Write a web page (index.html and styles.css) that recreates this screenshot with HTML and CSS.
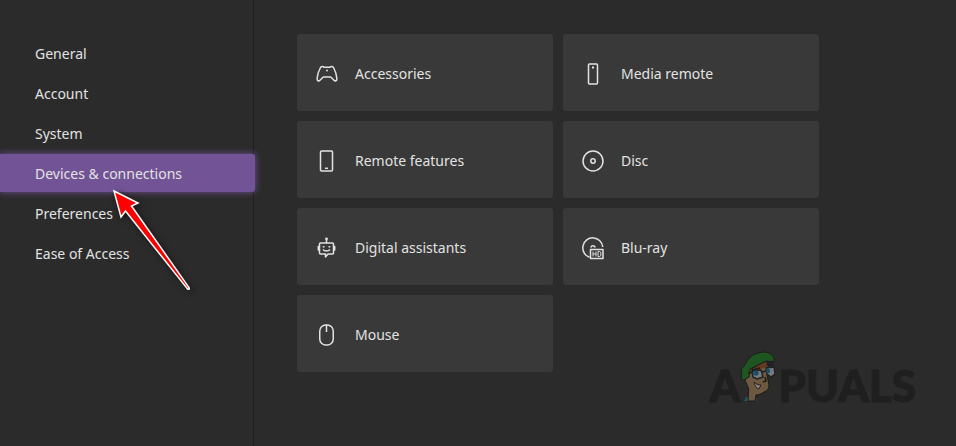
FILE: index.html
```html
<!DOCTYPE html>
<html lang="en">
<head>
<meta charset="utf-8">
<meta name="viewport" content="width=device-width, initial-scale=1">
<title>Settings</title>
<link rel="stylesheet" href="styles.css">
</head>
<body>
<div class="settings">
  <nav class="sidebar">
    <a class="nav-item" href="#general">General</a>
    <a class="nav-item" href="#account">Account</a>
    <a class="nav-item" href="#system">System</a>
    <a class="nav-item selected" href="#devices" aria-current="page">Devices &amp; connections</a>
    <a class="nav-item" href="#preferences">Preferences</a>
    <a class="nav-item" href="#ease">Ease of Access</a>
  </nav>
  <main class="tiles">
    <button class="tile" type="button">
      <svg class="icon" viewBox="0 0 24 24"><path d="M5.500 5.500C6.200 4.400 8.200 4.200 9 5.200h6c.8-1 2.800-.8 3.500.3 1.500 2.600 3 7.600 3.400 11.200.2 2.300-1.700 2.700-2.900 1.500L15.700 15H8.300L5 18.200c-1.200 1.200-3.100.8-2.900-1.500.4-3.600 1.900-8.600 3.400-11.200z"/><circle class="solid" cx="12" cy="8.500" r="1"/></svg>
      <span>Accessories</span>
    </button>
    <button class="tile" type="button">
      <svg class="icon" viewBox="0 0 24 24"><rect x="7.500" y="2" width="9" height="20" rx="1"/><path class="solid" d="M11 4.500h2v2h-2z"/></svg>
      <span>Media remote</span>
    </button>
    <button class="tile" type="button">
      <svg class="icon" viewBox="0 0 24 24"><rect x="5.500" y="2" width="12" height="20" rx="1"/><path d="M10 19.300h3"/></svg>
      <span>Remote features</span>
    </button>
    <button class="tile" type="button">
      <svg class="icon" viewBox="0 0 24 24"><circle cx="12" cy="12" r="10"/><circle cx="12" cy="12" r="2.200"/></svg>
      <span>Disc</span>
    </button>
    <button class="tile" type="button">
      <svg class="icon" viewBox="0 0 24 24"><path d="M5.500 7h12a1 1 0 0 1 1 1v9a1 1 0 0 1-1 1H13l-2.500 3v-3h-5a1 1 0 0 1-1-1V8a1 1 0 0 1 1-1zM11.500 7V3M4.500 10.500H3.300v3.500h1.200M18.500 10.500h1.200v3.500h-1.200M8 13.500c1.500 2 5.500 2 7 0"/><circle class="solid" cx="11.500" cy="2.800" r="1.400"/><path class="solid" d="M7.700 10h1.800v1.500H7.700zM13.500 10h1.800v1.500h-1.800z"/></svg>
      <span>Digital assistants</span>
    </button>
    <button class="tile" type="button">
      <svg class="icon" viewBox="0 0 24 24"><path d="M8.500 21.300A10 10 0 1 1 21.800 11M9.800 11.500a2.300 2.300 0 0 1 4.400 0"/><path d="M9.500 13.500h12.500v9H9.500z"/><path class="fine" d="M12 15.500v5M15 15.500v5M12 18h3M17 15.500h1.500q1.500 0 1.500 2.500t-1.500 2.500H17z"/></svg>
      <span>Blu-ray</span>
    </button>
    <button class="tile" type="button">
      <svg class="icon" viewBox="0 0 24 24"><rect x="4.750" y="2" width="13.500" height="20" rx="6"/><path d="M11.500 2v7"/></svg>
      <span>Mouse</span>
    </button>
  </main>
</div>
<svg class="pointer" viewBox="0 0 86 110" aria-hidden="true"><path d="M5 6L29 18 22.500 21 80 102.500Q81 105 78.500 104L16.500 26 12 32z"/></svg>
<div class="watermark">
  <span>A</span>
  <svg class="mascot" viewBox="0 0 38 52" aria-hidden="true">
    <path fill="#1d5965" d="M4 50l2-4 10 1 1 3z"/>
    <path fill="#6d5940" stroke="#1c1a18" d="M7 20L26 11l2 4-1 9 2 10c0 4-2 6-5 7-3 2-5 3-8 3l-1 6H8l.7-12L5 29z"/>
    <path fill="#653820" d="M17 15l9-5 1 6-5 1-4 3-8 3z"/>
    <path fill="#222226" d="M27 10h7v6l-6-1z"/>
    <path fill="#1f5521" stroke="#191d19" d="M1.300 28V18L5 14c2-5 5-8 8-10 4-2 9-3 13-3 4 1 7 3 8 6v4l-8-1-8 4-8 4-1 8-5 3z"/>
    <path fill="#777c82" stroke="#202226" stroke-width="1.500" d="M12 20l9-1 2 7-6 2-4-2zM26 17l8-1 1 7-4 3-4-3z"/>
    <circle fill="#194f69" cx="16" cy="22" r="2.700"/><circle fill="#194f69" cx="28" cy="20" r="2.200"/>
    <path fill="none" stroke="#201b17" stroke-width="1.500" d="M8 22l5-1M22 21l4-1M12 19l8-2M25 26l1 4-3 1"/>
    <path fill="#858585" stroke="#302019" d="M14 31c2 2 4 3 7 3l-2 4c-3-1-4-3-5-7z"/>
  </svg>
  <span>PUALS</span>
</div>
</body>
</html>
```

FILE: styles.css
```css
* {
  box-sizing: border-box;
}

body {
  margin: 0;
  background: #2b2b2b;
  color: #e2e2e2;
  font: 14px/20px "Noto Sans", "Open Sans", sans-serif;
}

.settings {
  display: flex;
  min-height: 100vh;
}

.sidebar {
  display: flex;
  flex: 0 0 255px;
  flex-direction: column;
  gap: 2px;
  padding-top: 34px;
  background: linear-gradient(#202020, #202020) right 1px top 0 / 1px 100% no-repeat;
}

.nav-item {
  padding: 10px 35px 8px;
  border-radius: 0 3px 3px 0;
  color: inherit;
  text-decoration: none;
}

.selected {
  background: #725496;
  box-shadow: 0 0 7px #725496;
}

.tiles {
  display: grid;
  flex: 1;
  grid-template-columns: repeat(2, minmax(0, 256px));
  grid-auto-rows: 77px;
  align-content: start;
  gap: 10px;
  padding: 34px 40px 34px 42px;
}

.tile {
  display: flex;
  align-items: center;
  gap: 16px;
  padding: 2px 18px 0;
  border: 0;
  border-radius: 3px;
  background: #393939;
  color: inherit;
  font: inherit;
}

.icon {
  width: 24px;
  height: 24px;
  fill: none;
  stroke: #e2e2e2;
  stroke-width: 1.5;
  stroke-linejoin: round;
}

.icon .solid {
  fill: #e2e2e2;
  stroke: none;
}

.icon .fine {
  stroke-width: 1;
}

.pointer {
  position: absolute;
  top: 185px;
  left: 109px;
  width: 86px;
  height: 110px;
  fill: #f00;
  stroke: #fff;
  stroke-width: 1.5;
  filter: drop-shadow(2px 2px 3px #151515);
}

.watermark {
  position: absolute;
  right: 40px;
  bottom: 43px;
  display: flex;
  align-items: flex-end;
  color: #1f1f1f;
  font: 900 44px/36px Lato, sans-serif;
  -webkit-text-stroke: 1px #1f1f1f;
}

.mascot {
  width: 38px;
  height: 52px;
}
```
